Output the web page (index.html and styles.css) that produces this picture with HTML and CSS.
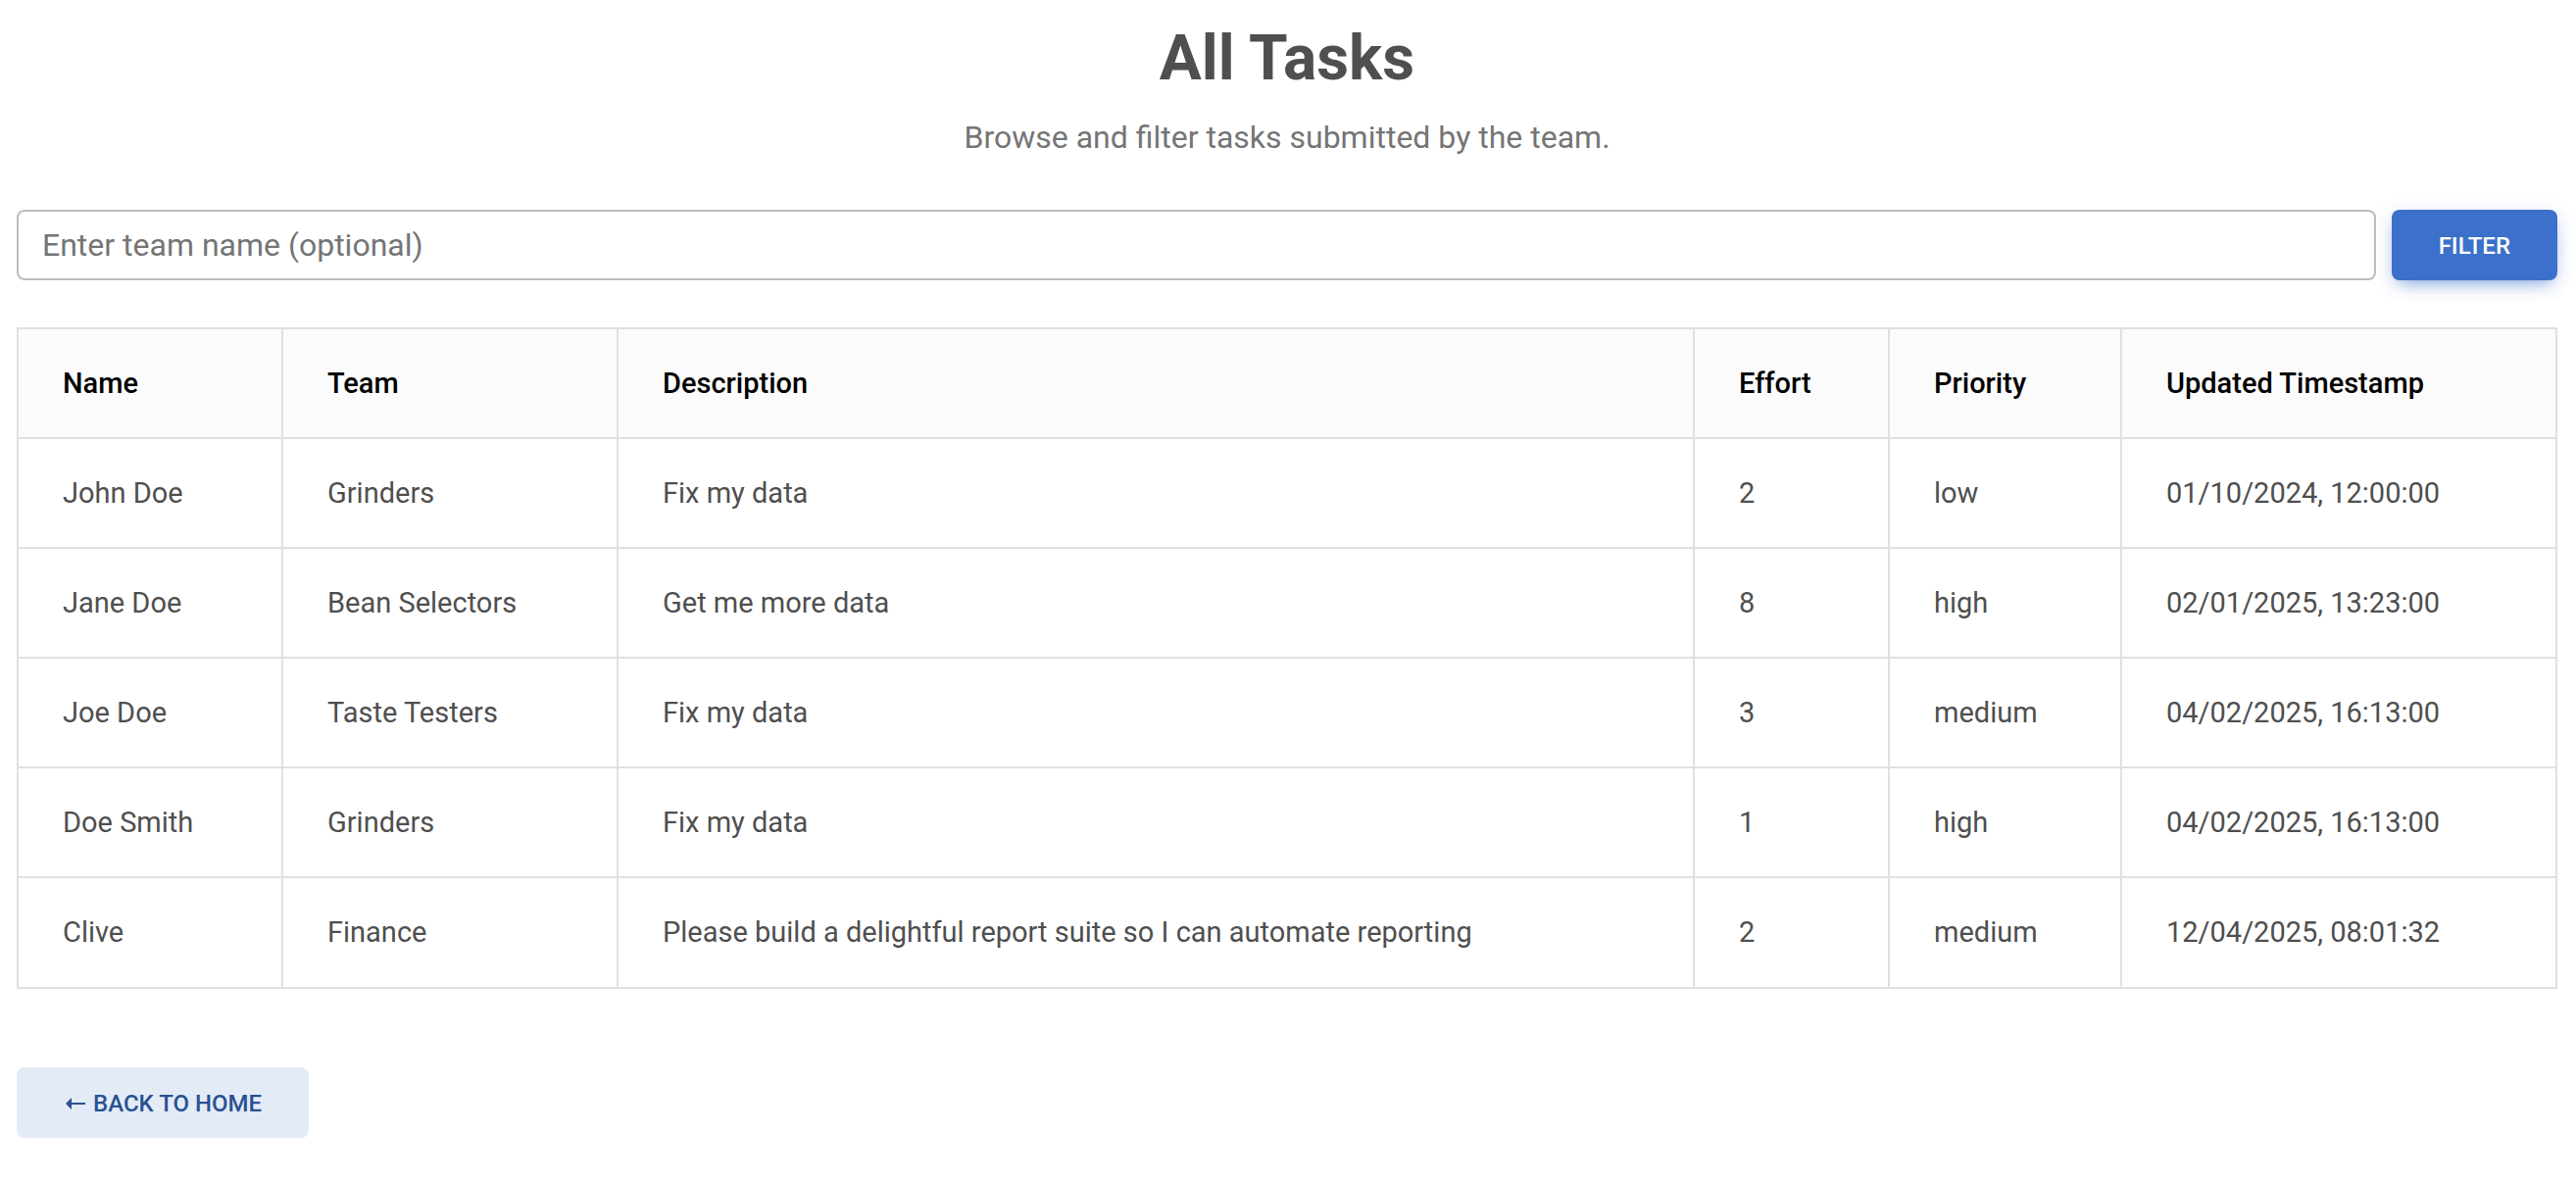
FILE: index.html
```html
<!DOCTYPE html>
<html lang="en">
<head>
  <meta charset="utf-8">
  <meta name="viewport" content="width=device-width, initial-scale=1">
  <title>All Tasks</title>
  <link rel="stylesheet" href="styles.css">
</head>
<body>
  <main class="page">
    <header class="intro">
      <h1 class="title">All Tasks</h1>
      <p class="subtitle">Browse and filter tasks submitted by the team.</p>
    </header>

    <form class="filter">
      <input class="filter-input" type="text" name="team" aria-label="Team name" placeholder="Enter team name (optional)">
      <button class="btn btn-primary" type="submit">Filter</button>
    </form>

    <table class="tasks">
      <colgroup>
        <col class="col-name">
        <col class="col-team">
        <col>
        <col class="col-effort">
        <col class="col-priority">
        <col class="col-updated">
      </colgroup>
      <thead>
        <tr><th scope="col">Name</th><th scope="col">Team</th><th scope="col">Description</th><th scope="col">Effort</th><th scope="col">Priority</th><th scope="col">Updated Timestamp</th></tr>
      </thead>
      <tbody>
        <tr><td>John Doe</td><td>Grinders</td><td>Fix my data</td><td>2</td><td>low</td><td>01/10/2024, 12:00:00</td></tr>
        <tr><td>Jane Doe</td><td>Bean Selectors</td><td>Get me more data</td><td>8</td><td>high</td><td>02/01/2025, 13:23:00</td></tr>
        <tr><td>Joe Doe</td><td>Taste Testers</td><td>Fix my data</td><td>3</td><td>medium</td><td>04/02/2025, 16:13:00</td></tr>
        <tr><td>Doe Smith</td><td>Grinders</td><td>Fix my data</td><td>1</td><td>high</td><td>04/02/2025, 16:13:00</td></tr>
        <tr><td>Clive</td><td>Finance</td><td>Please build a delightful report suite so I can automate reporting</td><td>2</td><td>medium</td><td>12/04/2025, 08:01:32</td></tr>
      </tbody>
    </table>

    <a class="btn btn-secondary" href="#">
      <svg class="arrow" viewBox="0 0 22 12" aria-hidden="true"><path d="M2 6 8 0V5H22V7H8V12Z" fill="currentColor"/></svg>
      Back to Home
    </a>
  </main>
</body>
</html>
```
FILE: styles.css
```css
* {
  box-sizing: border-box;
}

body {
  margin: 0;
  background: #fff;
  color: #4f4f4f;
  font-family: Roboto, "Liberation Sans", sans-serif;
  font-size: 32px;
  line-height: 52px;
}

.page {
  padding: 20px 19px 44px 17px;
}

.intro {
  margin-bottom: 48px;
  text-align: center;
}

.title {
  margin: 0 0 14px;
  font-size: 64px;
  font-weight: 700;
  line-height: 80px;
}

.subtitle {
  margin: 0;
  color: #757575;
}

.filter {
  display: flex;
  gap: 16px;
  margin-bottom: 48px;
}

.filter-input {
  flex: 1;
  min-width: 0;
  height: 72px;
  padding: 0 24px;
  border: 2px solid #bdbdbd;
  border-radius: 8px;
  background: #fff;
  color: #4f4f4f;
  font: inherit;
}

.filter-input::placeholder {
  color: #757575;
  opacity: 1;
}

.btn {
  display: inline-flex;
  align-items: center;
  justify-content: center;
  gap: 8px;
  height: 72px;
  padding: 2px 48px 0;
  border: 0;
  border-radius: 8px;
  font-family: inherit;
  font-size: 24px;
  font-weight: 500;
  line-height: 36px;
  text-decoration: none;
  text-transform: uppercase;
}

.btn-primary {
  background: #3b71ca;
  color: #fff;
  box-shadow: 0 8px 18px -8px rgba(59, 113, 202, 0.7), 0 4px 20px rgba(59, 113, 202, 0.16);
}

.btn-secondary {
  background: #e3ebf7;
  color: #285192;
}

.arrow {
  width: 22px;
  height: 12px;
}

.tasks {
  width: 100%;
  margin-bottom: 80px;
  border-collapse: collapse;
  table-layout: fixed;
  font-size: 29px;
  line-height: 46px;
}

.tasks th,
.tasks td {
  padding: 32px 44px 32px 45px;
  border: 2px solid #e0e0e0;
  font-weight: 400;
  text-align: left;
}

.tasks th {
  background: #fbfbfb;
  color: #000;
  font-weight: 500;
}

.tasks tr:last-child td {
  padding-bottom: 33px;
}

.col-name {
  width: 270px;
}

.col-team {
  width: 342px;
}

.col-effort {
  width: 199px;
}

.col-priority {
  width: 237px;
}

.col-updated {
  width: 444px;
}
```
